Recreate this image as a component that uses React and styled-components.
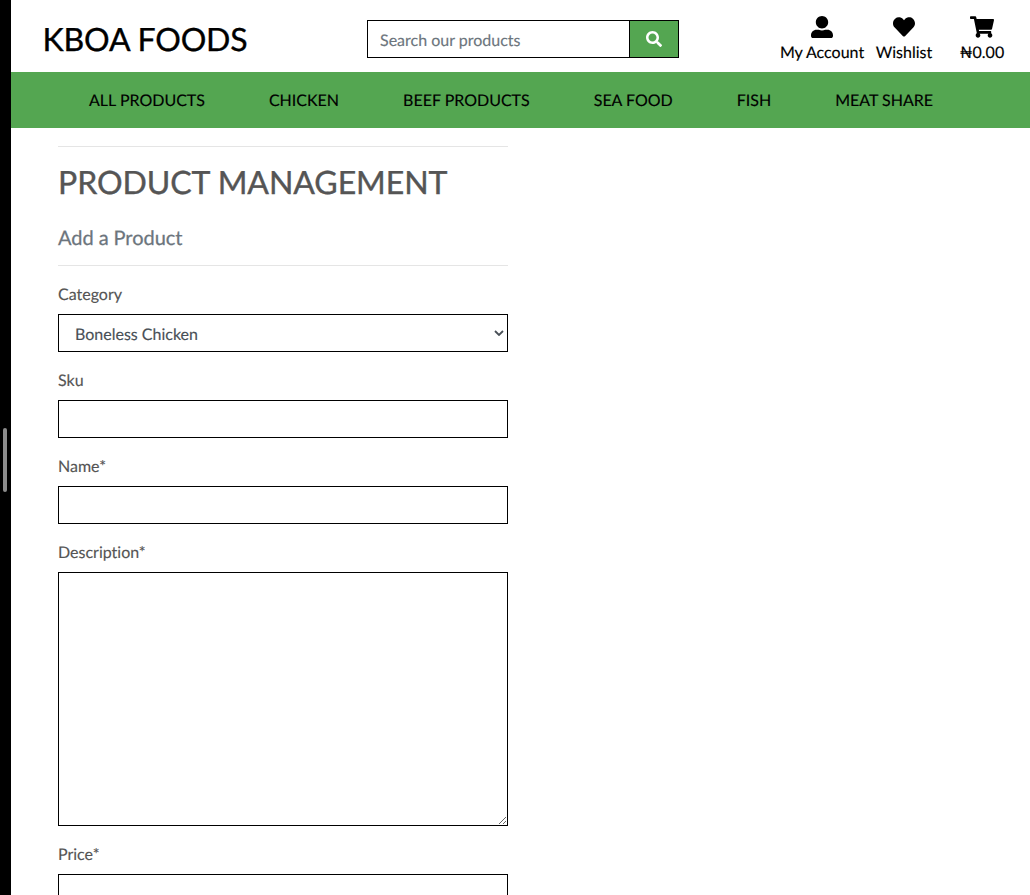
import React from 'react';
import styled, { createGlobalStyle } from 'styled-components';
import { FaSearch, FaUserAlt, FaHeart, FaShoppingCart } from 'react-icons/fa';

const GlobalStyle = createGlobalStyle`
  *, *::before, *::after { box-sizing: border-box; }
  html, body, #root { height: 100%; }
  body {
    margin: 0;
    overflow: hidden;
    background: #fff;
    color: #555;
    font: 400 16px/24px Lato, sans-serif;
    font-variant-ligatures: none;
    text-rendering: geometricPrecision;
    -webkit-text-stroke: 0.15px currentColor;
  }
  input, select, textarea, button { text-rendering: inherit; }
`;

const Shell = styled.div`
  display: flex;
  height: 100vh;
  overflow: hidden;
`;

const SplitBar = styled.div`
  flex: 0 0 11px;
  display: flex;
  align-items: center;
  padding: 25px 0 0 3px;
  background: #000;
`;

const SplitHandle = styled.span`
  width: 4px;
  height: 64px;
  border-radius: 2px;
  background: #8c8c8c;
`;

const Page = styled.div`
  flex: 1;
  min-width: 0;
`;

const Header = styled.header`
  display: flex;
  align-items: flex-start;
  height: 72px;
  color: #000;
`;

const Logo = styled.a`
  flex: 0 0 356px;
  padding: 20px 0 0 31.5px;
  font-size: 32px;
  line-height: 38px;
  letter-spacing: -0.15px;
  white-space: nowrap;
  -webkit-text-stroke-width: 0.35px;
`;

const SearchForm = styled.form`
  display: flex;
  width: 312px;
  height: 38px;
  margin-top: 20px;
  border: 1px solid #000;
`;

const SearchInput = styled.input`
  flex: 1;
  min-width: 0;
  padding: 3px 12px 0;
  border: 0;
  outline: 0;
  background: #fff;
  font: inherit;
  &::placeholder { color: #6c757d; opacity: 1; }
`;

const SearchButton = styled.button`
  display: flex;
  align-items: center;
  justify-content: center;
  width: 49px;
  padding: 0;
  border: 0;
  border-left: 1px solid #000;
  background: #54a651;
  color: #fff;
  font-size: 16px;
`;

const Actions = styled.div`
  display: flex;
  margin-left: 101px;
  padding-top: 16px;
`;

const Action = styled.a`
  display: flex;
  flex-direction: column;
  align-items: center;
  width: ${(p) => p.$width}px;
  line-height: 24px;
  white-space: nowrap;
  svg { display: block; height: 22px; margin-bottom: 3px; }
`;

const Nav = styled.nav`
  display: flex;
  gap: 64px;
  height: 56px;
  padding: 17px 0 0 78px;
  background: #54a651;
  color: #000;
`;

const NavLink = styled.a`
  white-space: nowrap;
`;

const Content = styled.main`
  width: 450px;
  margin: 18px 0 0 47px;
`;

const Divider = styled.hr`
  margin: 0;
  border: 0;
  border-top: 1px solid rgba(0, 0, 0, 0.1);
`;

const Title = styled.h2`
  margin: 16px 0 0;
  font-size: 32px;
  font-weight: 400;
  line-height: 38px;
  letter-spacing: -0.05px;
  white-space: nowrap;
  -webkit-text-stroke-width: 0.4px;
`;

const Subtitle = styled.h5`
  margin: 25px 0 15px;
  color: #6c757d;
  font-size: 20px;
  font-weight: 400;
  line-height: 24px;
  letter-spacing: -0.05px;
  -webkit-text-stroke-width: 0.25px;
`;

const Fields = styled.form`
  padding-top: 16px;
`;

const Field = styled.div`
  display: flex;
  flex-direction: column;
  gap: 8px;
  margin-bottom: 16px;
`;

const Label = styled.label`
  height: 24px;
  padding-top: 1px;
`;

const Input = styled.input`
  height: 38px;
  padding: 6px 12px;
  border: 1px solid #000;
  border-radius: 0;
  outline: 0;
  background: #fff;
  font: inherit;
`;

const TextArea = styled.textarea`
  height: 254px;
  padding: 6px 12px;
  border: 1px solid #000;
  outline: 0;
  background: #fff;
  font: inherit;
  resize: vertical;
`;

const SelectBox = styled.div`
  display: grid;
  height: 38px;
  > * { grid-area: 1 / 1; }
`;

const Select = styled.select`
  appearance: none;
  padding: 3px 16px 0;
  border: 1px solid #000;
  border-radius: 0;
  outline: 0;
  background: #fff;
  color: #495057;
  font: inherit;
`;

const Chevron = styled.svg`
  place-self: center end;
  margin-right: 4px;
  pointer-events: none;
`;

const links = ['ALL PRODUCTS', 'CHICKEN', 'BEEF PRODUCTS', 'SEA FOOD', 'FISH', 'MEAT SHARE'];

export default function App() {
  return (
    <Shell>
      <GlobalStyle />
      <SplitBar><SplitHandle /></SplitBar>
      <Page>
        <Header>
          <Logo>KBOA FOODS</Logo>
          <SearchForm>
            <SearchInput placeholder="Search our products" />
            <SearchButton type="button" aria-label="Search"><FaSearch /></SearchButton>
          </SearchForm>
          <Actions>
            <Action $width={84}><FaUserAlt size={22} />My Account</Action>
            <Action $width={80}><FaHeart size={22} />Wishlist</Action>
            <Action $width={76}><FaShoppingCart size={24} />₦0.00</Action>
          </Actions>
        </Header>
        <Nav>{links.map((l) => <NavLink key={l}>{l}</NavLink>)}</Nav>
        <Content>
          <Divider />
          <Title>PRODUCT MANAGEMENT</Title>
          <Subtitle>Add a Product</Subtitle>
          <Divider />
          <Fields>
            <Field>
              <Label>Category</Label>
              <SelectBox>
                <Select defaultValue="boneless">
                  <option value="boneless">Boneless Chicken</option>
                </Select>
                <Chevron width="10" height="6" viewBox="0 0 10 6" fill="none" stroke="#495057" strokeWidth="1.8">
                  <path d="M1 1l4 4 4-4" />
                </Chevron>
              </SelectBox>
            </Field>
            <Field><Label>Sku</Label><Input /></Field>
            <Field><Label>Name*</Label><Input /></Field>
            <Field><Label>Description*</Label><TextArea /></Field>
            <Field><Label>Price*</Label><Input /></Field>
          </Fields>
        </Content>
      </Page>
    </Shell>
  );
}
